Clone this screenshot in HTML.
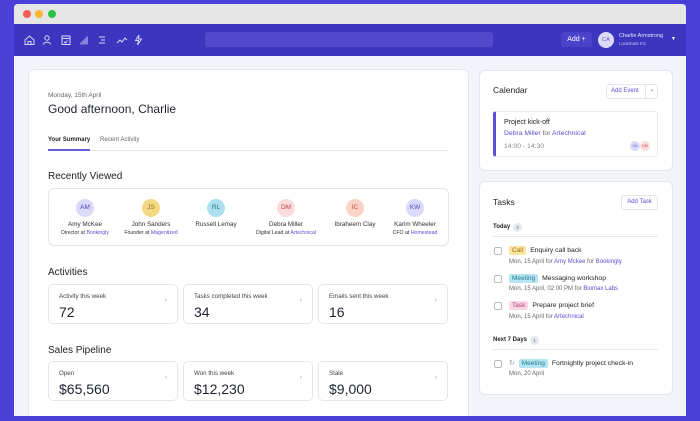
<!DOCTYPE html><html><head><style>
*{margin:0;padding:0;box-sizing:border-box}
html,body{width:700px;height:421px;overflow:hidden}
body{background:#4a3fd6;font-family:"Liberation Sans",sans-serif;position:relative;color:#1f2330}
.a{position:absolute}
.card{position:absolute;background:#fff;border:1px solid #e3e6ee;border-radius:6px}
.t{position:absolute;white-space:nowrap}
.av{position:absolute;width:18px;height:18px;border-radius:50%;font-size:6.5px;line-height:18px;text-align:center}
.nm{position:absolute;font-size:6.3px;text-align:center;width:90px;color:#333}
.sb{position:absolute;font-size:5.2px;text-align:center;width:100px;color:#333}
.lk{color:#5a4fd0}
.stat{position:absolute;background:#fff;border:1px solid #e3e6ee;border-radius:5px;width:130px;height:40px}
.stat .l{position:absolute;left:10px;top:8px;font-size:6.2px;color:#444}
.stat .v{position:absolute;left:10px;top:19px;font-size:14px;color:#1f2330}
.stat .c{position:absolute;right:10px;top:12px;font-size:7px;color:#999}
.cb{position:absolute;width:8px;height:8px;border:1px solid #bbb;border-radius:2px;background:#fff}
.tag{display:inline-block;font-size:6.5px;padding:1px 3px;border-radius:2px;margin-right:4px}
.tt{position:absolute;font-size:6.8px;white-space:nowrap;color:#222}
.ts{position:absolute;font-size:6px;white-space:nowrap;color:#666}
</style></head><body>
<div class="a" style="left:14px;top:4px;width:672px;height:412px;background:#f1f4f8;border-radius:4px 4px 0 0;overflow:hidden">
 <div class="a" style="left:0;top:0;width:672px;height:20px;background:#e6e6e6"></div>
 <div class="a" style="left:9px;top:6px;width:8px;height:8px;border-radius:50%;background:#f45c55"></div>
 <div class="a" style="left:21px;top:6px;width:8px;height:8px;border-radius:50%;background:#f7b731"></div>
 <div class="a" style="left:34px;top:6px;width:8px;height:8px;border-radius:50%;background:#2cc340"></div>
 <div class="a" style="left:0;top:20px;width:672px;height:32px;background:#3c35bd"></div>
 <div class="a" style="left:191px;top:28px;width:288px;height:15px;background:#5148cb;border-radius:3px"></div>
 <div class="a" style="left:547px;top:28px;width:31px;height:15px;background:#4a42c9;border-radius:3px;color:#fff;font-size:7px;line-height:15px;text-align:center">Add +</div>
 <div class="a" style="left:584px;top:28px;width:16px;height:16px;border-radius:50%;background:#dcdaf8;color:#5a4fd0;font-size:5.5px;line-height:16px;text-align:center">CA</div>
 <div class="t" style="left:605px;top:29px;font-size:5.5px;color:#e6e6ff">Charlie Armstrong</div>
 <div class="t" style="left:605px;top:37px;font-size:4.5px;color:#c8c6f2">Lookmark Inc</div>
 <div class="t" style="left:657px;top:32px;font-size:5px;color:#fff">▼</div>
 <svg class="a" style="left:10px;top:30px" width="135" height="12" fill="none" stroke="#d8d6ff" stroke-width="1">
  <path d="M1 6L5.5 2 10 6V10.5H1z M4 10.5V7.5h3v3"/>
  <circle cx="23" cy="4" r="2.2"/><path d="M19.5 10.5c0-3 7-3 7 0"/>
  <rect x="38" y="2" width="8" height="8.5"/><path d="M38 4.5h8 M40 7.5l1.5 1.5 2-2.5"/>
  <path d="M57 10.5v-2 M59 10.5v-4 M61 10.5v-6 M63 10.5v-8"/>
  <path d="M75 3h6 M77 6h4 M75 9h6"/>
  <path d="M93 9l3-3 2 2 3-4 2 2"/>
  <path d="M115 1l-3.5 5.5h3l-1 4.5 4-6h-3z"/>
 </svg>
 <div class="card" style="left:14px;top:65px;width:441px;height:360px">
  <div class="t" style="left:19px;top:22px;font-size:6.5px;color:#666">Monday, 15th April</div>
  <div class="t" style="left:19px;top:32px;font-size:12px;color:#1f2330">Good afternoon, Charlie</div>
  <div class="t" style="left:19px;top:67px;font-size:6px;font-weight:bold;color:#222">Your Summary</div>
  <div class="t" style="left:71px;top:67px;font-size:6px;color:#666">Recent Activity</div>
  <div class="a" style="left:19px;top:80px;width:401px;height:1px;background:#e6e8ee"></div>
  <div class="a" style="left:19px;top:79px;width:42px;height:2px;background:#6a5ee0"></div>
  <div class="t" style="left:19px;top:101px;font-size:10px;color:#222">Recently Viewed</div>
  <div class="t" style="left:19px;top:197px;font-size:10px;color:#222">Activities</div>
  <div class="t" style="left:19px;top:275px;font-size:10px;color:#222">Sales Pipeline</div>
 </div>
</div>
<div class="a" style="left:14px;top:416px;width:672px;height:5px;background:#4a3fd6"></div>

<div class="card" style="left:48px;top:188px;width:401px;height:58px">
 <div class="av" style="left:27px;top:10px;background:#dcd9fb;color:#5146b8">AM</div>
 <div class="av" style="left:93px;top:10px;background:#f5d884;color:#8b6a12">JS</div>
 <div class="av" style="left:158px;top:10px;background:#ace0ef;color:#266f86">RL</div>
 <div class="av" style="left:228px;top:10px;background:#fbdcdc;color:#c24343">DM</div>
 <div class="av" style="left:297px;top:10px;background:#fbd2c8;color:#c4533b">IC</div>
 <div class="av" style="left:357px;top:10px;background:#dcd9fb;color:#5146b8">KW</div>
 <div class="nm" style="left:-9px;top:32px">Amy McKee</div>
 <div class="nm" style="left:57px;top:32px">John Sanders</div>
 <div class="nm" style="left:122px;top:32px">Russell Lemay</div>
 <div class="nm" style="left:192px;top:32px">Debra Miller</div>
 <div class="nm" style="left:261px;top:32px">Ibraheem Clay</div>
 <div class="nm" style="left:321px;top:32px">Karim Wheeler</div>
 <div class="sb" style="left:-14px;top:41px">Director at <span class="lk">Bookingly</span></div>
 <div class="sb" style="left:52px;top:41px">Founder at <span class="lk">Magentized</span></div>
 <div class="sb" style="left:187px;top:41px">Digital Lead at <span class="lk">Artechnical</span></div>
 <div class="sb" style="left:316px;top:41px">CFO at <span class="lk">Homestead</span></div>
</div>

<div class="stat" style="left:48px;top:284px"><div class="l">Activity this week</div><div class="v">72</div><div class="c">›</div></div>
<div class="stat" style="left:183px;top:284px"><div class="l">Tasks completed this week</div><div class="v">34</div><div class="c">›</div></div>
<div class="stat" style="left:318px;top:284px"><div class="l">Emails sent this week</div><div class="v">16</div><div class="c">›</div></div>
<div class="stat" style="left:48px;top:361px"><div class="l">Open</div><div class="v">$65,560</div><div class="c">›</div></div>
<div class="stat" style="left:183px;top:361px"><div class="l">Won this week</div><div class="v">$12,230</div><div class="c">›</div></div>
<div class="stat" style="left:318px;top:361px"><div class="l">Stale</div><div class="v">$9,000</div><div class="c">›</div></div>

<div class="card" style="left:479px;top:70px;width:194px;height:101px">
 <div class="t" style="left:13px;top:14px;font-size:8.5px;color:#222">Calendar</div>
 <div class="a" style="left:126px;top:13px;width:52px;height:15px;border:1px solid #e3e6ee;border-radius:3px;font-size:6px;color:#5a4fd0;line-height:13px;padding-left:4px">Add Event</div>
 <div class="a" style="left:165px;top:13px;width:13px;height:15px;border-left:1px solid #e3e6ee;font-size:6px;color:#666;line-height:13px;text-align:center">⌄</div>
 <div class="a" style="left:13px;top:40px;width:165px;height:46px;border:1px solid #e8eaf0;border-left:3px solid #5a4fd8;border-radius:3px">
  <div class="t" style="left:8px;top:7px;font-size:7px;color:#222">Project kick-off</div>
  <div class="t" style="left:8px;top:18px;font-size:6.8px;color:#5a4fd0">Debra Miller <span style="color:#666">for</span> Artechnical</div>
  <div class="t" style="left:8px;top:31px;font-size:6.8px;color:#888">14:00 - 14:30</div>
  <div class="a" style="left:134px;top:29px;width:10px;height:10px;border-radius:50%;background:#dcd9fb;color:#5146b8;font-size:3.5px;line-height:10px;text-align:center">CA</div>
  <div class="a" style="left:144px;top:29px;width:10px;height:10px;border-radius:50%;background:#fbdcdc;color:#c24343;font-size:3.5px;line-height:10px;text-align:center">DM</div>
 </div>
</div>

<div class="card" style="left:479px;top:181px;width:194px;height:214px">
 <div class="t" style="left:13px;top:15px;font-size:8.5px;color:#222">Tasks</div>
 <div class="a" style="left:141px;top:13px;width:37px;height:15px;border:1px solid #e3e6ee;border-radius:3px;font-size:6px;color:#5a4fd0;line-height:13px;text-align:center">Add Task</div>
 <div class="t" style="left:13px;top:42px;font-size:6px;font-weight:bold;color:#222">Today</div>
 <div class="a" style="left:33px;top:41px;width:9px;height:9px;border-radius:50%;background:#e6e8f0;font-size:4.5px;line-height:9px;text-align:center;color:#666">3</div>
 <div class="a" style="left:13px;top:54px;width:165px;height:1px;background:#e6e8ee"></div>
 <div class="cb" style="left:14px;top:65px"></div>
 <div class="tt" style="left:29px;top:64px"><span class="tag" style="background:#fbe3a0;color:#9a7416">Call</span>Enquiry call back</div>
 <div class="ts" style="left:29px;top:77px">Mon, 15 April for <span class="lk">Amy Mckee</span> for <span class="lk">Bookingly</span></div>
 <div class="cb" style="left:14px;top:93px"></div>
 <div class="tt" style="left:29px;top:92px"><span class="tag" style="background:#b5e5f3;color:#2a7a93">Meeting</span>Messaging workshop</div>
 <div class="ts" style="left:29px;top:104px">Mon, 15 April, 02:00 PM for <span class="lk">Biomax Labs</span></div>
 <div class="cb" style="left:14px;top:120px"></div>
 <div class="tt" style="left:29px;top:119px"><span class="tag" style="background:#fbd6e6;color:#b0457a">Task</span>Prepare project brief</div>
 <div class="ts" style="left:29px;top:132px">Mon, 15 April for <span class="lk">Artechnical</span></div>
 <div class="t" style="left:13px;top:155px;font-size:6px;font-weight:bold;color:#222">Next 7 Days</div>
 <div class="a" style="left:50px;top:154px;width:9px;height:9px;border-radius:50%;background:#e6e8f0;font-size:4.5px;line-height:9px;text-align:center;color:#666">1</div>
 <div class="a" style="left:13px;top:167px;width:165px;height:1px;background:#e6e8ee"></div>
 <div class="cb" style="left:14px;top:178px"></div>
 <div class="tt" style="left:29px;top:177px"><span style="color:#999;margin-right:4px">↻</span><span class="tag" style="background:#b5e5f3;color:#2a7a93">Meeting</span>Fortnightly project check-in</div>
 <div class="ts" style="left:29px;top:189px">Mon, 20 April</div>
</div>
</body></html>
